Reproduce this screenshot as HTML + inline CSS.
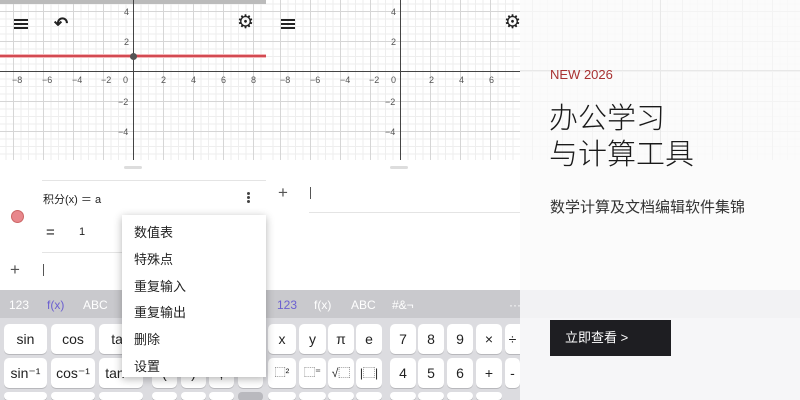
<!DOCTYPE html>
<html><head><meta charset="utf-8"><style>
*{margin:0;padding:0;box-sizing:border-box}
html{width:800px;height:400px;overflow:hidden}
body{width:800px;height:400px;overflow:hidden;background:#fff;font-family:"Liberation Sans","Noto Sans CJK SC",sans-serif;position:relative;color:#222}
.abs{position:absolute}
.grid{position:absolute;top:0;height:160px;background-color:#fff;
background-image:linear-gradient(#d6d6d6 1px,transparent 1px),linear-gradient(90deg,#d6d6d6 1px,transparent 1px),linear-gradient(#eee 1px,transparent 1px),linear-gradient(90deg,#eee 1px,transparent 1px);
background-size:30px 30px,30px 30px,7.5px 7.5px,7.5px 7.5px}
.lbl{position:absolute;font-size:9px;color:#555}
.sheet{position:absolute;top:160px;height:240px;background:#fff;border-radius:12px 12px 0 0}
.handle{position:absolute;top:6px;width:18px;height:3px;border-radius:2px;background:#ddd}
.tabs{position:absolute;top:290px;height:28px;background:#c9c9cd;font-size:12px;color:#fff}
.tabs span{position:absolute;top:8px}
.keys{position:absolute;top:318px;height:82px;background:#dcdce0}
.k{position:absolute;height:30px;background:#fff;border-radius:5px;box-shadow:0 1px 0 #b8b8bc;font-size:14px;text-align:center;line-height:30px;color:#222}
.k.r3{height:8px}
.menu{position:absolute;left:122px;top:215px;width:144px;height:162px;background:#fff;box-shadow:0 2px 8px rgba(0,0,0,.3);font-size:13px}
.menu div{position:absolute;left:12px}
</style></head><body>
<div class="grid" style="left:0;width:266px;background-position:13px 11px"></div>
<div class="abs" style="left:0;top:0;width:266px;height:4px;background:#bbb"></div>
<div class="abs" style="left:133px;top:0;width:1px;height:160px;background:#444"></div>
<div class="abs" style="left:0;top:71px;width:266px;height:1px;background:#444"></div>
<div class="abs" style="left:0;top:54px;width:266px;height:4px;background:#f3b5b8"></div>
<div class="abs" style="left:0;top:55px;width:266px;height:2px;background:#d34a52"></div>
<div class="abs" style="left:130px;top:53px;width:7px;height:7px;border-radius:50%;background:#555"></div>
<div class="lbl" style="left:12px;top:75px">−8</div><div class="lbl" style="left:42px;top:75px">−6</div><div class="lbl" style="left:72px;top:75px">−4</div><div class="lbl" style="left:101px;top:75px">−2</div><div class="lbl" style="left:123px;top:75px">0</div><div class="lbl" style="left:161px;top:75px">2</div><div class="lbl" style="left:191px;top:75px">4</div><div class="lbl" style="left:221px;top:75px">6</div><div class="lbl" style="left:251px;top:75px">8</div>
<div class="lbl" style="left:124px;top:7px">4</div><div class="lbl" style="left:124px;top:37px">2</div><div class="lbl" style="left:118px;top:97px">−2</div><div class="lbl" style="left:118px;top:127px">−4</div>
<div class="abs" style="left:14px;top:19px;width:14px;height:2px;background:#222;box-shadow:0 4px 0 #222,0 8px 0 #222"></div>
<div class="abs" style="left:54px;top:14px;font-size:17px;font-weight:bold">↶</div>
<div class="abs" style="left:237px;top:11px;font-size:19px">⚙</div>
<div class="grid" style="left:266px;width:254px;background-position:14px 11px"></div>
<div class="abs" style="left:400px;top:0;width:1px;height:160px;background:#444"></div>
<div class="abs" style="left:266px;top:71px;width:254px;height:1px;background:#444"></div>
<div class="lbl" style="left:280px;top:75px">−8</div><div class="lbl" style="left:310px;top:75px">−6</div><div class="lbl" style="left:340px;top:75px">−4</div><div class="lbl" style="left:369px;top:75px">−2</div><div class="lbl" style="left:391px;top:75px">0</div><div class="lbl" style="left:429px;top:75px">2</div><div class="lbl" style="left:459px;top:75px">4</div><div class="lbl" style="left:489px;top:75px">6</div>
<div class="lbl" style="left:391px;top:7px">4</div><div class="lbl" style="left:391px;top:37px">2</div><div class="lbl" style="left:385px;top:97px">−2</div><div class="lbl" style="left:385px;top:127px">−4</div>
<div class="abs" style="left:281px;top:19px;width:14px;height:2px;background:#222;box-shadow:0 4px 0 #222,0 8px 0 #222"></div>
<div class="abs" style="left:504px;top:11px;font-size:19px">⚙</div>
<div class="sheet" style="left:0;width:268px"><div class="handle" style="left:124px"></div></div>
<div class="sheet" style="left:266px;width:254px"><div class="handle" style="left:124px"></div></div>
<div class="abs" style="left:42px;top:180px;width:224px;height:1px;background:#e4e4e4"></div>
<div class="abs" style="left:43px;top:191px;font-size:11px">积分(x) ＝ a</div>
<div class="abs" style="left:247px;top:192px;width:3px;height:3px;background:#444;border-radius:50%;box-shadow:0 4px 0 #444,0 8px 0 #444"></div>
<div class="abs" style="left:11px;top:210px;width:13px;height:13px;border-radius:50%;background:#e8878c;border:1px solid #c66"></div>
<div class="abs" style="left:46px;top:224px;font-size:15px">=</div>
<div class="abs" style="left:79px;top:226px;font-size:11px">1</div>
<div class="abs" style="left:42px;top:252px;width:224px;height:1px;background:#e4e4e4"></div>
<div class="abs" style="left:10px;top:260px;font-size:17px;color:#555">+</div>
<div class="abs" style="left:43px;top:264px;width:1px;height:12px;background:#555"></div>
<div class="abs" style="left:278px;top:183px;font-size:17px;color:#555">+</div>
<div class="abs" style="left:310px;top:187px;width:1px;height:12px;background:#555"></div>
<div class="abs" style="left:309px;top:212px;width:211px;height:1px;background:#e4e4e4"></div>
<div class="tabs" style="left:0;width:520px"><span style="left:9px">123</span><span style="left:47px;color:#6b5fd0">f(x)</span><span style="left:83px">ABC</span>
<span style="left:277px;color:#6b5fd0">123</span><span style="left:314px">f(x)</span><span style="left:351px">ABC</span><span style="left:392px">#&amp;¬</span><span style="left:509px">···</span></div>
<div class="keys" style="left:0;width:520px"></div>
<div class="k" style="left:4px;top:324px;width:43px">sin</div><div class="k" style="left:51px;top:324px;width:44px">cos</div><div class="k" style="left:99px;top:324px;width:44px">tan</div>
<div class="k" style="left:4px;top:358px;width:43px">sin⁻¹</div><div class="k" style="left:51px;top:358px;width:44px">cos⁻¹</div><div class="k" style="left:99px;top:358px;width:44px">tan⁻¹</div>
<div class="k r3" style="left:4px;top:392px;width:43px"></div><div class="k r3" style="left:51px;top:392px;width:44px"></div><div class="k r3" style="left:99px;top:392px;width:44px"></div>
<div class="k" style="left:152px;top:358px;width:25px">(</div><div class="k" style="left:181px;top:358px;width:25px">)</div><div class="k" style="left:209px;top:358px;width:25px">,</div><div class="k" style="left:238px;top:358px;width:25px"></div>
<div class="k r3" style="left:152px;top:392px;width:25px"></div><div class="k r3" style="left:181px;top:392px;width:25px"></div><div class="k r3" style="left:209px;top:392px;width:25px"></div><div class="k r3" style="left:238px;top:392px;width:25px;background:#b9b9be"></div>
<div class="k" style="left:268px;top:324px;width:28px">x</div><div class="k" style="left:299px;top:324px;width:27px">y</div><div class="k" style="left:328px;top:324px;width:26px">π</div><div class="k" style="left:356px;top:324px;width:26px">e</div>
<div class="k" style="left:390px;top:324px;width:26px">7</div><div class="k" style="left:418px;top:324px;width:26px">8</div><div class="k" style="left:447px;top:324px;width:26px">9</div><div class="k" style="left:476px;top:324px;width:26px">×</div><div class="k" style="left:505px;top:324px;width:15px;border-radius:5px 0 0 5px">÷</div>
<div class="k" style="left:268px;top:358px;width:28px;font-size:11px">⬚²</div><div class="k" style="left:299px;top:358px;width:27px;font-size:11px">⬚⁼</div><div class="k" style="left:328px;top:358px;width:26px;font-size:12px">√⬚</div><div class="k" style="left:356px;top:358px;width:26px;font-size:12px">|⬚|</div>
<div class="k" style="left:390px;top:358px;width:26px">4</div><div class="k" style="left:418px;top:358px;width:26px">5</div><div class="k" style="left:447px;top:358px;width:26px">6</div><div class="k" style="left:476px;top:358px;width:26px">+</div><div class="k" style="left:505px;top:358px;width:15px">-</div>
<div class="k r3" style="left:268px;top:392px;width:28px"></div><div class="k r3" style="left:299px;top:392px;width:27px"></div><div class="k r3" style="left:328px;top:392px;width:26px"></div><div class="k r3" style="left:356px;top:392px;width:26px"></div><div class="k r3" style="left:390px;top:392px;width:26px"></div><div class="k r3" style="left:418px;top:392px;width:26px"></div><div class="k r3" style="left:447px;top:392px;width:26px"></div><div class="k r3" style="left:476px;top:392px;width:26px"></div>
<div class="menu"><div style="top:7px">数值表</div><div style="top:34px">特殊点</div><div style="top:61px">重复输入</div><div style="top:87px">重复输出</div><div style="top:114px">删除</div><div style="top:141px">设置</div></div>
<div class="abs" style="left:520px;top:0;width:280px;height:400px;background:#fbfbfb"></div>
<div class="grid" style="left:520px;width:280px;opacity:.2;background-position:12px 11px"></div>
<div class="abs" style="left:520px;top:70px;width:280px;height:1px;background:#e8e8e8"></div>
<div class="abs" style="left:660px;top:0;width:1px;height:160px;background:#e8e8e8"></div>
<div class="abs" style="left:520px;top:290px;width:280px;height:28px;background:#f2f2f4"></div>
<div class="abs" style="left:520px;top:318px;width:280px;height:82px;background:#f6f6f8"></div>
<div class="abs" style="left:550px;top:67px;font-size:13px;color:#a83232">NEW 2026</div>
<div class="abs" style="left:549px;top:101px;font-size:29px;line-height:36px;color:#1a1a1a;font-weight:300">办公学习<br>与计算工具</div>
<div class="abs" style="left:550px;top:196px;font-size:15px;color:#333">数学计算及文档编辑软件集锦</div>
<div class="abs" style="left:550px;top:320px;width:121px;height:36px;background:#1e1e22;color:#fff;font-size:13px;line-height:36px;padding-left:15px">立即查看 &gt;</div>
</body></html>
